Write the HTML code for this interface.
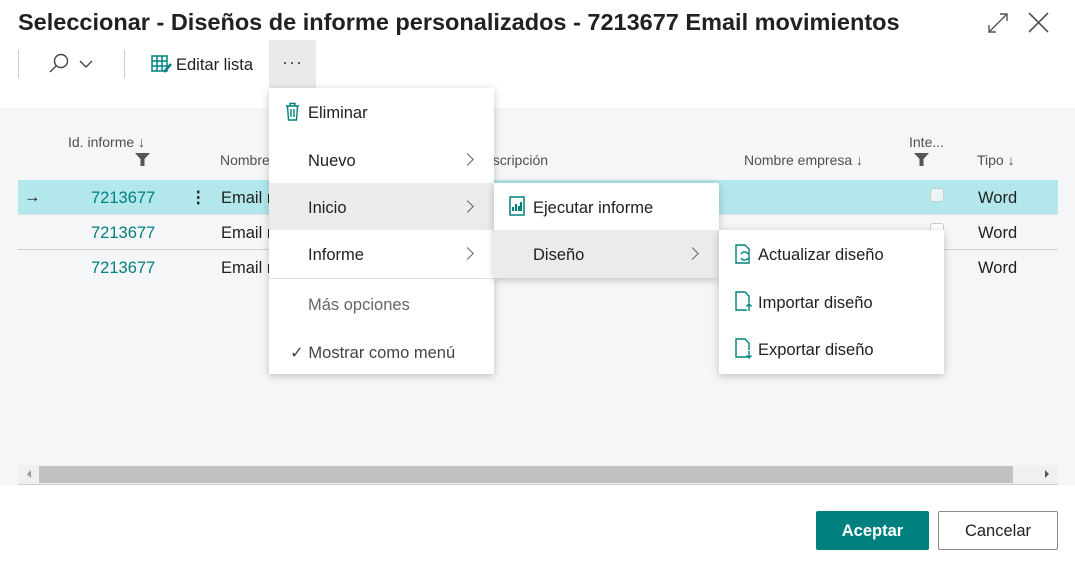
<!DOCTYPE html>
<html><head><meta charset="utf-8"><style>
*{margin:0;padding:0;box-sizing:border-box}
body{width:1075px;height:562px;position:relative;background:#fff;font-family:"Segoe UI","Liberation Sans",sans-serif;color:#212121;overflow:hidden}
.a{position:absolute}
.t{font-size:16.5px;white-space:nowrap}
.h{font-size:14px;color:#505050;white-space:nowrap}
.teal{color:#00807f}
.menu{position:absolute;background:#fff;box-shadow:0 2px 8px rgba(0,0,0,.22)}
.mi{position:absolute;left:0;right:0;height:47px;font-size:16.5px;line-height:51px;white-space:nowrap}
.chev{position:absolute;right:22px;top:19px;width:9px;height:9px;border-right:1.3px solid #666;border-top:1.3px solid #666;transform:rotate(45deg)}
</style></head><body>
<div class="a" style="left:18px;top:9px;font-size:23.5px;font-weight:600;color:#212121;white-space:nowrap">Seleccionar - Diseños de informe personalizados - 7213677 Email movimientos</div>
<svg class="a" style="left:987px;top:12px" width="22" height="22" viewBox="0 0 22 22" fill="none" stroke="#555" stroke-width="1.4"><path d="M2 20L20 2M13 2h7v7M2 13v7h7"/></svg>
<svg class="a" style="left:1028px;top:12px" width="21" height="21" viewBox="0 0 21 21" stroke="#555" stroke-width="1.6"><path d="M1 1L20 20M20 1L1 20"/></svg>
<div class="a" style="left:18px;top:50px;width:1px;height:28px;background:#ccc"></div>
<svg class="a" style="left:48px;top:53px" width="48" height="22" viewBox="0 0 48 22" fill="none" stroke="#444" stroke-width="1.4"><circle cx="13" cy="8" r="6.5"/><path d="M8.5 12.5L2 19M32 8l6 6 6-6"/></svg>
<div class="a" style="left:124px;top:50px;width:1px;height:28px;background:#ccc"></div>
<svg class="a" style="left:151px;top:55px" width="22" height="19" viewBox="0 0 22 19" fill="none" stroke="#00807f" stroke-width="1.5"><rect x="1" y="1" width="15" height="15"/><path d="M1 6h15M1 11h15M6 1v15M11 1v15"/><path d="M13 17l7-8" stroke-width="2.5"/></svg>
<div class="a t" style="left:176px;top:56px">Editar lista</div>
<div class="a" style="left:269px;top:40px;width:47px;height:48px;background:#eaeaea"></div>
<div class="a" style="left:282px;top:52px;font-size:18px;color:#444;letter-spacing:1px">···</div>

<div class="a" style="left:0;top:108px;width:1075px;height:377px;background:#f5f6f7"></div>
<div class="a h" style="left:68px;top:134px">Id. informe ↓</div>
<svg class="a" style="left:135px;top:153px" width="15" height="13" viewBox="0 0 15 13" fill="#555"><path d="M0 0h15l-5.5 6v7h-4V6z"/></svg>
<div class="a h" style="left:220px;top:152px">Nombre</div>
<div class="a h" style="left:485px;top:152px">escripción</div>
<div class="a h" style="left:744px;top:152px">Nombre empresa ↓</div>
<div class="a h" style="left:909px;top:134px">Inte...</div>
<svg class="a" style="left:914px;top:153px" width="15" height="13" viewBox="0 0 15 13" fill="#555"><path d="M0 0h15l-5.5 6v7h-4V6z"/></svg>
<div class="a h" style="left:977px;top:152px">Tipo ↓</div>

<div class="a" style="left:18px;top:180px;width:1040px;height:35px;background:#b2e7eb"></div>
<div class="a" style="left:18px;top:249px;width:1040px;height:1px;background:#d0d0d0"></div>
<div class="a" style="left:18px;top:214px;width:1040px;height:1px;background:#e0e0e0"></div>
<div class="a t" style="left:24px;top:188px">→</div>
<div class="a t teal" style="left:91px;top:189px">7213677</div>
<div class="a t teal" style="left:91px;top:224px">7213677</div>
<div class="a t teal" style="left:91px;top:259px">7213677</div>
<div class="a t" style="left:190px;top:188px;font-weight:bold">⋮</div>
<div class="a t" style="left:221px;top:189px">Email m</div>
<div class="a t" style="left:221px;top:224px">Email m</div>
<div class="a t" style="left:221px;top:259px">Email m</div>
<div class="a" style="left:930px;top:188px;width:14px;height:14px;border:1px solid #ccc;border-radius:3px;background:#e8f4f5"></div>
<div class="a" style="left:930px;top:223px;width:14px;height:14px;border:1px solid #ccc;border-radius:3px;background:#fff"></div>
<div class="a t" style="left:978px;top:189px">Word</div>
<div class="a t" style="left:978px;top:224px">Word</div>
<div class="a t" style="left:978px;top:259px">Word</div>

<div class="a" style="left:18px;top:465px;width:1040px;height:19px;background:#f0f0f0"></div>
<div class="a" style="left:39px;top:466px;width:974px;height:17px;background:#c1c1c1"></div>
<div class="a" style="left:18px;top:484px;width:1040px;height:1px;background:#ccc"></div>
<div class="a" style="left:27px;top:470px;border-right:4px solid #999;border-top:4px solid transparent;border-bottom:4px solid transparent"></div>
<div class="a" style="left:1045px;top:470px;border-left:4px solid #555;border-top:4px solid transparent;border-bottom:4px solid transparent"></div>

<div class="a" style="left:816px;top:511px;width:113px;height:39px;background:#00807f;border-radius:2px;color:#fff;font-size:16.5px;font-weight:600;text-align:center;line-height:41px">Aceptar</div>
<div class="a" style="left:938px;top:511px;width:120px;height:39px;border:1px solid #8a8a8a;border-radius:2px;font-size:16.5px;text-align:center;line-height:39px">Cancelar</div>

<div class="menu" style="left:269px;top:88px;width:225px;height:286px">
 <div class="mi" style="top:0">
  <svg class="a" style="left:16px;top:14px" width="15" height="19" viewBox="0 0 15 19" fill="none" stroke="#00807f" stroke-width="1.4"><path d="M1 4h13M5 4V1.5h5V4M2.5 4l1 14h8l1-14M6 7v8M9 7v8"/></svg>
  <span style="position:absolute;left:39px">Eliminar</span></div>
 <div class="mi" style="top:48px"><span style="position:absolute;left:39px">Nuevo</span><i class="chev"></i></div>
 <div class="mi" style="top:95px;background:#ebebeb"><span style="position:absolute;left:39px">Inicio</span><i class="chev"></i></div>
 <div class="mi" style="top:142px"><span style="position:absolute;left:39px">Informe</span><i class="chev"></i></div>
 <div class="a" style="left:0;right:0;top:190px;height:1px;background:#e3e3e3"></div>
 <div class="mi" style="top:192px;color:#666"><span style="position:absolute;left:39px">Más opciones</span></div>
 <div class="mi" style="top:240px;color:#444"><span style="position:absolute;left:21px">✓ Mostrar como menú</span></div>
</div>
<div class="menu" style="left:494px;top:183px;width:225px;height:95px">
 <div class="mi" style="top:0">
  <svg class="a" style="left:15px;top:13px" width="16" height="20" viewBox="0 0 16 20" fill="none" stroke="#00807f" stroke-width="1.5"><rect x="1" y="1" width="14" height="18"/><path d="M4 15V11M7 15V8M10 15V10M12 15V6" stroke-width="2"/></svg>
  <span style="position:absolute;left:39px">Ejecutar informe</span></div>
 <div class="mi" style="top:47px;background:#ebebeb;height:48px"><span style="position:absolute;left:39px">Diseño</span><i class="chev"></i></div>
</div>
<div class="menu" style="left:719px;top:230px;width:225px;height:144px">
 <div class="mi" style="top:0">
  <svg class="a" style="left:16px;top:14px" width="18" height="20" viewBox="0 0 18 20" fill="none" stroke="#00807f" stroke-width="1.4"><path d="M1 1h9l4 4v14H1z"/><path d="M6 10a4 4 0 0 1 7 0M13 14a4 4 0 0 1-7 0"/></svg>
  <span style="position:absolute;left:39px">Actualizar diseño</span></div>
 <div class="mi" style="top:48px">
  <svg class="a" style="left:16px;top:13px" width="18" height="21" viewBox="0 0 18 21" fill="none" stroke="#00807f" stroke-width="1.4"><path d="M12 19H1V1h9l4 4v7"/><path d="M14 20v-7M11.5 15.5L14 13l2.5 2.5"/></svg>
  <span style="position:absolute;left:39px">Importar diseño</span></div>
 <div class="mi" style="top:95px">
  <svg class="a" style="left:16px;top:13px" width="18" height="21" viewBox="0 0 18 21" fill="none" stroke="#00807f" stroke-width="1.4"><path d="M12 19H1V1h9l4 4v7"/><path d="M14 13v7M11.5 17.5L14 20l2.5-2.5"/></svg>
  <span style="position:absolute;left:39px">Exportar diseño</span></div>
</div>
</body></html>
